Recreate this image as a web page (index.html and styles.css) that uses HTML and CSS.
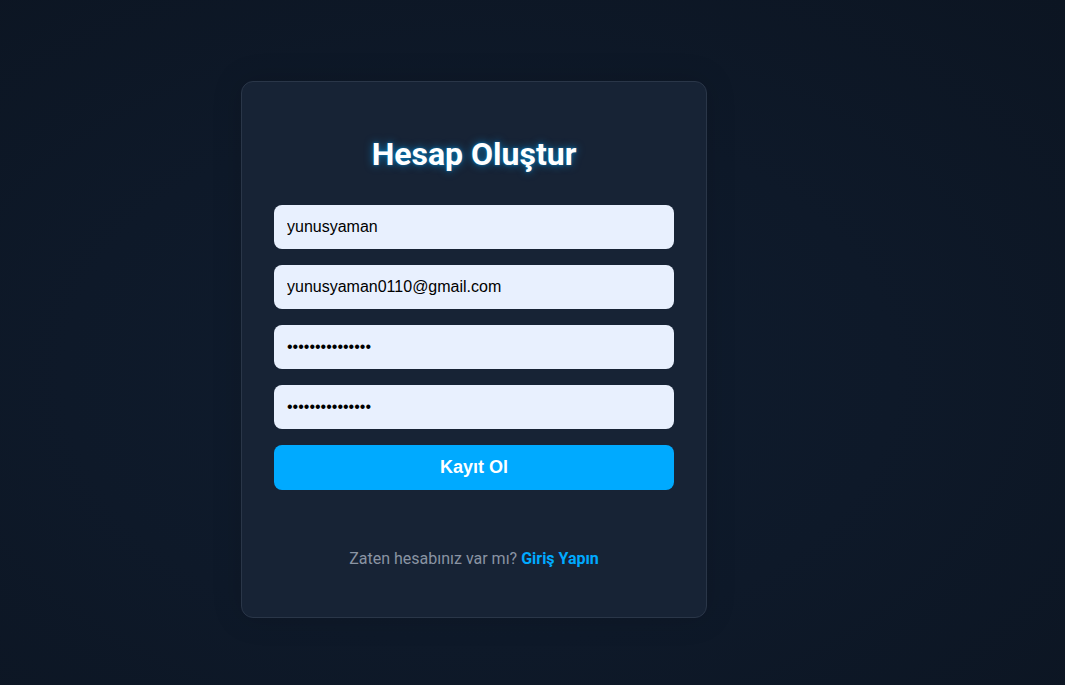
FILE: index.html
```html
<!DOCTYPE html>
<html lang="tr">
<head>
<meta charset="utf-8">
<title>Hesap Oluştur</title>
<link rel="stylesheet" href="styles.css">
</head>
<body>
<main class="page">
  <section class="card">
    <h2 class="title">Hesap Oluştur</h2>
    <form class="form">
      <input class="field" type="text" value="yunusyaman">
      <input class="field" type="email" value="yunusyaman0110@gmail.com">
      <input class="field" type="password" value="123456789012345">
      <input class="field" type="password" value="123456789012345">
      <button class="btn" type="button">Kayıt Ol</button>
    </form>
    <p class="footer">Zaten hesabınız var mı? <a class="link" href="#">Giriş Yapın</a></p>
  </section>
</main>
</body>
</html>
```

FILE: styles.css
```css
html, body {
  margin: 0;
  height: 100%;
}
body {
  background: radial-gradient(ellipse at 45% 55%, #0f1c2e 0%, #0e1929 50%, #0c1522 100%);
  font-family: Roboto, "Liberation Sans", Arial, sans-serif;
}
.page {
  display: flex;
  align-items: flex-start;
  padding: 81px 0 0 241px;
}
.card {
  width: 400px;
  padding: 32px 32px 49px;
  background: #172335;
  border: 1px solid #2a3648;
  border-radius: 12px;
  box-shadow: 0 0 30px rgba(0, 0, 0, 0.15);
  display: flex;
  flex-direction: column;
}
.title {
  margin: 22px 0 32px;
  text-align: center;
  color: #ffffff;
  font-family: Roboto, sans-serif;
  font-weight: 700;
  font-size: 32px;
  line-height: 37px;
  text-shadow: 0 0 8px rgba(0, 170, 255, 0.6), 0 0 3px rgba(0, 170, 255, 0.5);
}
.form {
  display: flex;
  flex-direction: column;
  gap: 16px;
}
.field {
  box-sizing: border-box;
  height: 44px;
  width: 100%;
  padding: 0 13px;
  border: none;
  border-radius: 8px;
  background: #e8f0fe;
  color: #000;
  font-family: "Liberation Sans", Arial, sans-serif;
  font-size: 16px;
  outline: none;
}
.btn {
  height: 45px;
  border: none;
  border-radius: 8px;
  background: #00aaff;
  color: #fff;
  font-family: "Liberation Sans", Arial, sans-serif;
  font-weight: 700;
  font-size: 18px;
  cursor: pointer;
}
.footer {
  margin: 59px 0 0;
  text-align: center;
  font-size: 16px;
  line-height: 19px;
  color: #8a94a3;
}
.link {
  color: #00aaff;
  font-weight: 700;
  text-decoration: none;
}
```
